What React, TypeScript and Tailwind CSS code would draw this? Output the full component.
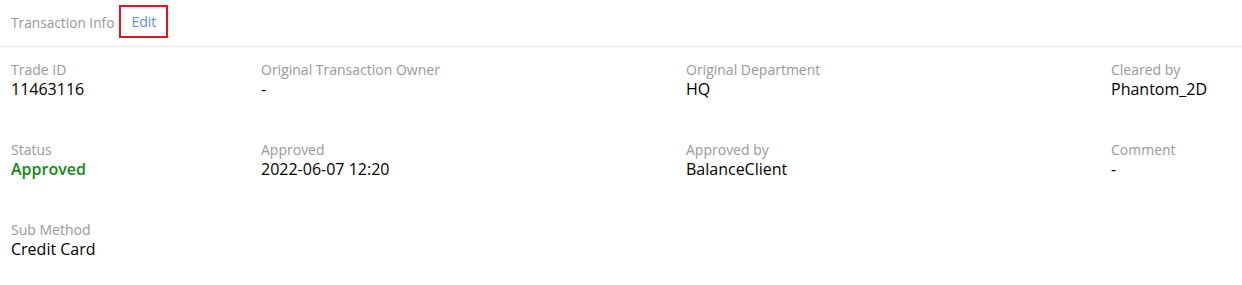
export default function App() {
  const rows: { label: string; value: string; green?: boolean }[][] = [
    [
      { label: "Trade ID", value: "11463116" },
      { label: "Original Transaction Owner", value: "-" },
      { label: "Original Department", value: "HQ" },
      { label: "Cleared by", value: "Phantom_2D" },
    ],
    [
      { label: "Status", value: "Approved", green: true },
      { label: "Approved", value: "2022-06-07 12:20" },
      { label: "Approved by", value: "BalanceClient" },
      { label: "Comment", value: "-" },
    ],
    [{ label: "Sub Method", value: "Credit Card" }],
  ];

  return (
    <div
      className="min-h-screen bg-white"
      style={{ fontFamily: '"Open Sans", sans-serif' }}
    >
      {/* Header */}
      <div className="flex h-[47px] items-center border-b border-[#ebebeb] pl-[11px]">
        <span className="text-[13.7px] text-[#999999]">Transaction Info</span>
        <div className="mb-[3px] ml-[5px] flex h-[33px] w-[49px] items-center justify-center border-[2px] border-[#e8111c]">
          <span className="text-[14px] text-[#5b8fe8]">Edit</span>
        </div>
      </div>

      {/* Fields */}
      <div className="grid grid-cols-[250px_425px_425px_1fr] gap-y-[41px] pl-[11px] pt-[13px]">
        {rows.map((row) =>
          [0, 1, 2, 3].map((i) => {
            const f = row[i];
            if (!f) return <div key={row[0].label + i} />;
            return (
              <div key={f.label} className="flex flex-col">
                <span className="text-[14px] leading-[19px] text-[#999999]">
                  {f.label}
                </span>
                <span
                  className={
                    f.green
                      ? "text-[16px] font-semibold leading-[20px] text-[#118a11]"
                      : "text-[16px] font-medium leading-[20px] text-black"
                  }
                >
                  {f.value}
                </span>
              </div>
            );
          })
        )}
      </div>
    </div>
  );
}
